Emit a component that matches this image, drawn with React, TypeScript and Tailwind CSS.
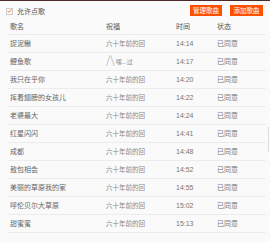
import React from "react"

const rows = [
  ["捉泥鳅", "14:14"],
  ["鲤鱼歌", "14:17"],
  ["我只在乎你", "14:20"],
  ["挥着翅膀的女孩儿", "14:22"],
  ["老婆最大", "14:24"],
  ["红星闪闪", "14:41"],
  ["成都", "14:48"],
  ["敖包相会", "14:52"],
  ["美丽的草原我的家", "14:55"],
  ["呼伦贝尔大草原", "15:02"],
  ["甜蜜蜜", "15:13"],
]

export default function App() {
  return (
    <div className="relative h-[242px] w-[270px] overflow-hidden bg-[#fafafa] font-['Noto_Sans_CJK_SC','Noto_Sans',sans-serif] text-[7px] leading-none">
      <div className="h-px bg-[#4a2a2a]" />
      <div className="flex h-[18px] items-center justify-between pl-[6px] pr-[7px]">
        <label className="flex items-center gap-[4px] pt-[2px] text-[#555]">
          <span className="flex size-[7px] items-center justify-center border border-[#ccc] bg-white">
            <svg viewBox="0 0 8 8" className="size-[6px]">
              <path d="M1 4.2 L3 6.2 L7 1.5" fill="none" stroke="#ff5a00" strokeWidth="1.4" />
            </svg>
          </span>
          允许点歌
        </label>
        <div className="flex gap-[8px]">
          <button className="flex h-[11px] w-[32px] items-center justify-center bg-[#ff5000] text-[6.5px] text-white">
            管理歌曲
          </button>
          <button className="flex h-[11px] w-[33px] items-center justify-center bg-[#ff5000] text-[6.5px] text-white">
            添加歌曲
          </button>
        </div>
      </div>
      <div className="ml-[8px] mr-[4px]">
        <div className="grid h-[16px] grid-cols-[96px_70px_41px_1fr] items-center border-b border-[#ececec] pl-[2px] text-[#555]">
          <span>歌名</span>
          <span>祝福</span>
          <span>时间</span>
          <span>状态</span>
        </div>
        {rows.map(([name, time], i) => (
          <div
            key={name}
            className="grid h-[18px] grid-cols-[96px_70px_41px_1fr] items-center border-b border-[#ececec] pl-[2px] text-[#777]"
          >
            <span className="text-[#666]">{name}</span>
            {i === 1 ? (
              <span className="flex items-end whitespace-nowrap text-[#888]">
                <span className="-mt-[4px] text-[11px] font-light leading-none text-[#999]">/\</span>
                <span className="ml-[1px] text-[6px]">嘿...过</span>
              </span>
            ) : (
              <span className="whitespace-nowrap text-[6.5px] leading-[9px] text-[#888]">六十年前的回</span>
            )}
            <span className="font-['Liberation_Sans',sans-serif] text-[7px]">{time}</span>
            <span>已同意</span>
          </div>
        ))}
      </div>
      <div className="absolute right-[1px] top-[127px] h-[25px] w-px bg-[#ddd]" />
    </div>
  )
}
